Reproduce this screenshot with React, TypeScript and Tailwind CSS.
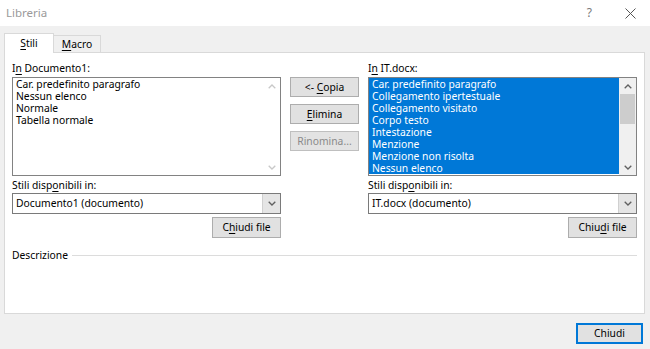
import React from "react";

const U = ({ c }: { c: string }) => (
  <span className="underline decoration-1 underline-offset-[2px]">{c}</span>
);

function Chevron({ up, color }: { up?: boolean; color: string }) {
  return (
    <svg width="8" height="5" viewBox="0 0 8 5" className="block">
      <polyline
        points={up ? "0.7,4.3 4,1 7.3,4.3" : "0.7,0.7 4,4 7.3,0.7"}
        fill="none"
        stroke={color}
        strokeWidth="1.3"
      />
    </svg>
  );
}

function Btn({
  children,
  disabled,
  className = "",
}: {
  children: React.ReactNode;
  disabled?: boolean;
  className?: string;
}) {
  return (
    <div
      className={`h-[20px] flex items-center justify-center border text-[10.3px] leading-none ${
        disabled
          ? "border-[#bfbfbf] bg-[#e3e3e3] text-[#8a8a8a]"
          : "border-[#adadad] bg-[#e1e1e1] text-black"
      } ${className}`}
    >
      {children}
    </div>
  );
}

function ListBox({
  items,
  selected,
}: {
  items: string[];
  selected?: boolean;
}) {
  return (
    <div className="h-[99px] border border-[#828282] bg-white flex">
      <div className="flex-1 flex flex-col min-w-0">
        <div className={`flex flex-col ${selected ? "bg-[#0078d7]" : ""}`}>
          {items.map((t) => (
            <div
              key={t}
              className={`h-[12px] shrink-0 flex items-center pl-[3px] text-[10.3px] leading-[12px] whitespace-nowrap ${
                selected ? "text-white" : "text-black"
              }`}
            >
              {t}
            </div>
          ))}
        </div>
      </div>
      <div
        className={`w-[17px] flex flex-col items-center ${
          selected ? "bg-[#f0f0f0]" : "bg-white"
        }`}
      >
        <div className="h-[16px] flex items-center justify-center">
          <Chevron up color={selected ? "#606060" : "#c8c8c8"} />
        </div>
        {selected && <div className="w-[15px] h-[30px] bg-[#cdcdcd]" />}
        <div className="flex-1" />
        <div className="h-[16px] flex items-center justify-center">
          <Chevron color={selected ? "#606060" : "#c8c8c8"} />
        </div>
      </div>
    </div>
  );
}

function Dropdown({ value }: { value: string }) {
  return (
    <div className="h-[21px] border border-[#7a7a7a] bg-white flex">
      <div className="flex-1 flex items-center pl-[3px] text-[10.3px] leading-none text-black">
        {value}
      </div>
      <div className="w-[18px] bg-[#e5e5e5] border-l border-[#d0d0d0] flex items-center justify-center">
        <Chevron color="#606060" />
      </div>
    </div>
  );
}

function Column({
  title,
  items,
  selected,
  docValue,
  closeLabel,
}: {
  title: React.ReactNode;
  items: string[];
  selected?: boolean;
  docValue: string;
  closeLabel: React.ReactNode;
}) {
  return (
    <div className="flex flex-col">
      <div className="h-[15px] flex items-center text-[10.3px] leading-none text-black">
        {title}
      </div>
      <div className="mt-[1px]">
        <ListBox items={items} selected={selected} />
      </div>
      <div className="h-[14px] mt-[2px] flex items-center text-[10.3px] leading-none text-black">
        Stili disp<U c="o" />nibili in:
      </div>
      <div className="mt-[1px]">
        <Dropdown value={docValue} />
      </div>
      <div className="flex justify-end mt-[3px]">
        <Btn className="w-[69px] h-[21px]">{closeLabel}</Btn>
      </div>
    </div>
  );
}

export default function App() {
  return (
    <div className="w-[650px] h-[349px] bg-[#f0f0f0] overflow-hidden font-['Noto_Sans',sans-serif]">
      {/* title bar */}
      <div className="h-[26px] bg-white flex items-center pl-[6px] pr-[14px]">
        <span className="text-[11.5px] text-[#9a9a9a] leading-none">Libreria</span>
        <div className="ml-auto flex items-center gap-[33px]">
          <span className="text-[12px] text-[#7a7a7a] leading-none">?</span>
          <svg width="11" height="11" viewBox="0 0 11 11" className="block">
            <path d="M0.5 0.5 L10.5 10.5 M10.5 0.5 L0.5 10.5" stroke="#555" strokeWidth="1" />
          </svg>
        </div>
      </div>

      <div className="pl-[4px] pr-[5px] pt-[6px]">
        {/* tabs */}
        <div className="flex items-end h-[20px]">
          <div className="w-[50px] h-[20px] bg-white border border-b-0 border-[#d9d9d9] relative z-10 -mb-px flex items-center justify-center text-[10.3px] leading-none text-black pb-[1px]">
            <span>
              <U c="S" />tili
            </span>
          </div>
          <div className="w-[47px] h-[17px] bg-[#f0f0f0] border-t border-r border-[#d9d9d9] flex items-center justify-center text-[10.3px] leading-none text-black">
            <span>
              <U c="M" />acro
            </span>
          </div>
        </div>

        {/* panel */}
        <div className="h-[262px] bg-white border border-[#d9d9d9] pl-[7px] pr-[7px] pt-[8px]">
          <div className="grid grid-cols-[269px_69px_269px] gap-x-[9px]">
            <Column
              title={
                <span>
                  I<U c="n" /> Documento1:
                </span>
              }
              items={[
                "Car. predefinito paragrafo",
                "Nessun elenco",
                "Normale",
                "Tabella normale",
              ]}
              docValue="Documento1 (documento)"
              closeLabel={
                <span>
                  C<U c="h" />iudi file
                </span>
              }
            />
            <div className="flex flex-col gap-[7px] pt-[16px]">
              <Btn>
                <span>
                  &lt;- <U c="C" />opia
                </span>
              </Btn>
              <Btn>
                <span>
                  <U c="E" />limina
                </span>
              </Btn>
              <Btn disabled>Rinomina...</Btn>
            </div>
            <Column
              title={
                <span>
                  I<U c="n" /> IT.docx:
                </span>
              }
              selected
              items={[
                "Car. predefinito paragrafo",
                "Collegamento ipertestuale",
                "Collegamento visitato",
                "Corpo testo",
                "Intestazione",
                "Menzione",
                "Menzione non risolta",
                "Nessun elenco",
              ]}
              docValue="IT.docx (documento)"
              closeLabel={
                <span>
                  Chiu<U c="d" />i file
                </span>
              }
            />
          </div>

          <div className="mt-[10px] h-[14px] flex items-center gap-[4px]">
            <span className="text-[10.3px] leading-none text-black">Descrizione</span>
            <div className="flex-1 h-px bg-[#dcdcdc]" />
          </div>
        </div>
      </div>

      <div className="flex justify-end pr-[7px] pt-[9px]">
        <div className="w-[67px] h-[21px] border-2 border-[#0078d7] bg-[#e1e1e1] flex items-center justify-center text-[10.3px] leading-none text-black">
          Chiudi
        </div>
      </div>
    </div>
  );
}
